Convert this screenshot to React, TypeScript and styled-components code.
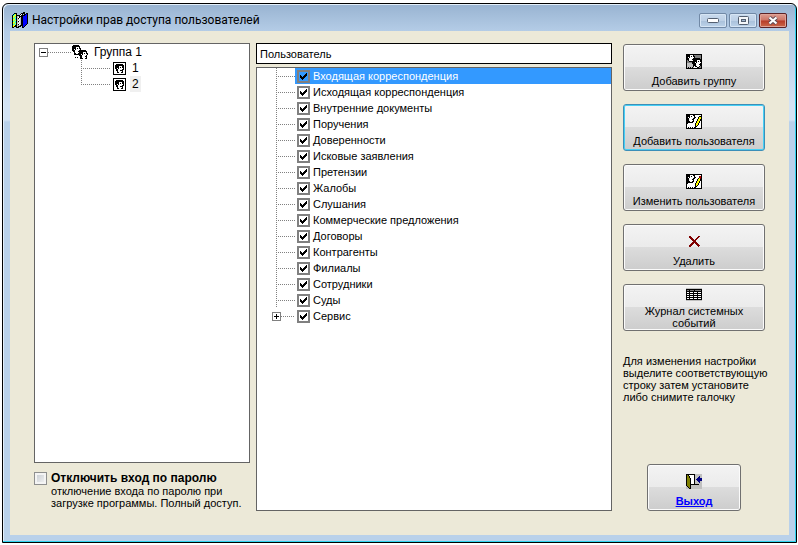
import React, { useState } from 'react';
import styled, { createGlobalStyle, css } from 'styled-components';

const GlobalStyle = createGlobalStyle`
  * { box-sizing: border-box; }
  body {
    margin: 0;
    background: #fff;
    color: #000;
    font: 11px/12px "Liberation Sans", Arial, sans-serif;
  }
  button, input { font: inherit; color: inherit; margin: 0; }
`;

/* ---------- pixel icons ---------- */

const palette: Record<string, string> = {
  k: '#000000',
  w: '#ffffff',
  g: '#808080',
  s: '#c0c0c0',
  y: '#ffff00',
  o: '#808000',
  r: '#800000',
  e: '#c00000',
  b: '#000080',
  u: '#0000ff',
  c: '#00ffff',
};

const icons: Record<string, string[]> = {
  books: [
    '...........kk...',
    '..kkk....kkkk.kk',
    '.kcyk...kwk.kkuk',
    'kcyykkkkwkkkkuuk',
    'kyycksskkkkuuuuk',
    'kycykswkskkuuuuk',
    'kcyckskwskkuuuuk',
    'kyycksswskkuuuuk',
    'kycykswsskkuuuuk',
    'kcyckskwskkuuuuk',
    'kyycksswskkuuuuk',
    'kycykswsskkuuuuk',
    'kcyckskwskkuuuk.',
    'kyykkssskkkuuk..',
    'kykkkskkk.kuk...',
    'kk..kkk...kk....',
  ],
  group: [
    '.kkkkkk.........',
    'kkkkkkkk........',
    'kkkkwwwk........',
    'kkkkwkwkk.......',
    'kkwkwwwwk.......',
    'kkkwwwwkkkkkkk..',
    '.kkwwwkkkkkkkkk.',
    '..kwwwwkkkkwwwk.',
    '..kkwwkkkkkwkwkk',
    '..kkkkkkkwkwwwwk',
    '.......kkkwwwwk.',
    '........kkwwwkk.',
    '...k.k..kkwwwwk.',
    '........kkkwwkk.',
  ],
  user: [
    'kkkkkkkkkkkkk',
    'kwwwwwwwwwwwk',
    'kwwkkkkkkkwwk',
    'kwkkkkkkkkkwk',
    'kwkkkkwwwkkwk',
    'kwkkkkwkwkkwk',
    'kwkkwkwwwwkwk',
    'kwwkkwwwwkkwk',
    'kwwkkwwkkkwwk',
    'kwwwkwwwwkwwk',
    'kwwwkkwwkkwwk',
    'kwwwwwwwwwwwk',
    'kkkkkkkkkkkkk',
  ],
  addGroup: [
    'kkkkkkkkkkkkkkkk',
    'kkkkwwwkgggggggk',
    'kkkkwkwkkggggggk',
    'kkwkwwwwkggggggk',
    'kkkwwwwkkkkkkkgk',
    'kkkwwwkkkkkkkkkk',
    'kgkwwwwkkkkwwwkk',
    'kggkkkkkkkkwkwkk',
    'kgggggkkkwkwwwwk',
    'kssssskkkkwwwwkk',
    'ksssssskkkwwwkkk',
    'ksssssskkkwwwwkk',
    'ksssssskwkkwwkgk',
    'kskskskswwwkkggk',
    'kkkkkkkkkkkkkkkk',
  ],
  editUser: [
    'kkkkkkkkkkkkkkkk',
    'kkkkwwwkkwwwwwwk',
    'kkkkwkwwkwwwwrek',
    'kkwkwwwwkkwwwrek',
    'kkkwwwwkkwwwkyrk',
    'kkkwwwkkwwwkyykk',
    'kkkwwwwkwwwkyykk',
    'kkkkwwkkwwkyykwk',
    'kkkkkkkwwwkyykwk',
    'kkwwwwwwwkyykwwk',
    'kwwwwwwwwkyykwwk',
    'kwwwwwwwwkykwwwk',
    'kwwwwwwwwkkwwwwk',
    'kwkwkwkwkkwwwwwk',
    'kkkkkkkkkkkkkkkk',
  ],
  addUser: [
    'kkkkkkkkkkkkkkkk',
    'kkkkwwwkkwwwwwwk',
    'kkkkwkwwkwwwwkkk',
    'kkwkwwwwkkwwkyyk',
    'kkkwwwwkkwwwkyyk',
    'kkkwwwkkwwwkyykk',
    'kkkwwwwkwwwkyykk',
    'kkkkwwkkwwkyykwk',
    'kkkkkkkwwwkyykwk',
    'kkwwwwwwwkyykwwk',
    'kwwwwwwwwkyykwwk',
    'kwwwwwwwwkykwwwk',
    'kwwwwwwwwkkwwwwk',
    'kwkwkwkwkkwwwwwk',
    'kkkkkkkkkkkkkkkk',
  ],
  remove: [
    'rr.......rr',
    'rrr.....rr.',
    '.rrr...rr..',
    '..rrr.rr...',
    '...rrrr....',
    '....rrr....',
    '...rrrrr...',
    '..rrr.rrr..',
    '.rrr...rrr.',
    'rrr.....rrr',
    'rr.......r.',
  ],
  journal: [
    'ssssssssssssssss',
    'kkkkkkkkkkkkkkkk',
    'kggkggggkggggggk',
    'kkkkkkkkkkkkkkkk',
    'kwwkwwwkwwwkwwwk',
    'kkkkkkkkkkkkkkkk',
    'kwwkwwwkwwwkwwwk',
    'kkkkkkkkkkkkkkkk',
    'kwwkwwwkwwwkwwwk',
    'kkkkkkkkkkkkkkkk',
    'kwwkwwwkwwwkwwwk',
    'kkkkkkkkkkkkkkkk',
    'ssssssssssssssss',
  ],
  exit: [
    'kkkkkkkkksssssss',
    'kokwwwwwksssssss',
    'kookwwwwkssssbss',
    'kookwwwwksssbbss',
    'koookwwwkssbbbbb',
    'koookwwwksbbbbbb',
    'koookwwwkssbbbbb',
    'koookwwwksssbbss',
    'koookwwwkssssbss',
    'koookwwwksssssss',
    'koookkkkkkkkksss',
    'koooksssssssssss',
    'skooksssssssssss',
    'sskoksssssssssss',
    'ssskksssssssssss',
  ],
  tick: [
    '......k',
    '.....kk',
    'k...kkk',
    'kk.kkk.',
    'kkkkk..',
    '.kkk...',
    '..k....',
  ],
  plus: ['..k..', '..k..', 'kkkkk', '..k..', '..k..'],
  minus: ['kkkkk'],
};

const IconSvg = styled.svg`
  display: block;
  flex: none;
`;

function PixelIcon({ name }: { name: string }) {
  const rows = icons[name];
  const width = rows[0].length;
  return (
    <IconSvg
      width={width}
      height={rows.length}
      viewBox={`0 0 ${width} ${rows.length}`}
      shapeRendering="crispEdges"
      aria-hidden="true"
    >
      {rows.flatMap((row, y) =>
        [...row].map((c, x) =>
          palette[c] ? <rect key={`${x}-${y}`} x={x} y={y} width="1" height="1" fill={palette[c]} /> : null,
        ),
      )}
    </IconSvg>
  );
}

/* ---------- window ---------- */

const Desktop = styled.div`
  display: flex;
  min-height: 100vh;
  padding: 3px 1px 2px 2px;
`;

const Window = styled.div`
  flex: 1;
  display: flex;
  flex-direction: column;
  padding: 0 7px 7px;
  border: 1px solid #000;
  border-radius: 6px 6px 0 0;
  background: linear-gradient(#98b3d1, #b5cde7 28px, #d3e3f4 100px, #d3e3f4 116px, #b9d1ea 118px);
  box-shadow: inset -1px -1px #2fd3ee, inset 1px 1px #e4f0fb;
`;

const TitleBar = styled.header`
  display: flex;
  align-items: center;
  gap: 4px;
  height: 27px;
  padding: 5px 2px 0;
`;

const Title = styled.h1`
  flex: 1;
  margin: 0;
  font: 12px/16px Roboto, "Open Sans", sans-serif;
  white-space: nowrap;
`;

const CaptionButtons = styled.div`
  display: flex;
  gap: 2px;
`;

const CaptionButton = styled.button<{ $close?: boolean }>`
  display: flex;
  align-items: center;
  justify-content: center;
  width: 28px;
  height: 15px;
  padding: 0;
  border: 1px solid #7189a6;
  border-radius: 2px;
  background: linear-gradient(#c9daed, #bdd0e6 50%, #a8c0da 51%, #bdd3ea);
  box-shadow: inset 0 0 0 1px #d6e5f4;
  ${(p) =>
    p.$close &&
    css`
      border-color: #5c2226;
      background: linear-gradient(#dd9d92, #cd7465 48%, #b73a27 52%, #cb6a4b);
      box-shadow: inset 0 0 0 1px #e0a397;
    `}
`;

const Content = styled.main`
  flex: 1;
  display: grid;
  grid-template-columns: 216fr 356fr 147px;
  column-gap: 6px;
  padding: 12px 24px 24px;
  background: #ece9d8;
`;

const Column = styled.section`
  display: flex;
  flex-direction: column;
  min-width: 0;
`;

const Actions = styled(Column)`
  gap: 13px;
  padding: 1px 0 0 5px;
`;

/* ---------- trees ---------- */

const Tree = styled.ul`
  flex: 1;
  margin: 0;
  padding: 0;
  border: 1px solid #646464;
  background: #fff;
  list-style: none;
`;

const Branch = styled.ul`
  margin: 0;
  padding: 0 0 0 46px;
  list-style: none;
`;

const Row = styled.div<{ $indent?: number }>`
  display: flex;
  align-items: center;
  height: 16px;
  padding-left: ${(p) => p.$indent ?? 0}px;
`;

const Guide = styled.span<{ $width: number; $trunk?: 'full' | 'half' }>`
  flex: none;
  align-self: stretch;
  width: ${(p) => p.$width}px;
  background-image: repeating-linear-gradient(90deg, #808080 0 1px, transparent 1px 2px),
    repeating-linear-gradient(#808080 0 1px, transparent 1px 2px);
  background-repeat: no-repeat;
  background-position: 0 8px, 0 0;
  background-size: 100% 1px,
    ${(p) => (p.$trunk ? '1px' : '0')} ${(p) => (p.$trunk === 'half' ? '8px' : '100%')};
`;

const Expander = styled.button`
  display: flex;
  align-items: center;
  justify-content: center;
  flex: none;
  width: 9px;
  height: 9px;
  padding: 0;
  border: 1px solid #808080;
  background: #fff;
`;

const NodeLabel = styled.span<{ $active?: boolean }>`
  margin-left: 4px;
  padding: 2px;
  font-size: 12px;
  background: ${(p) => (p.$active ? '#f0f0f0' : 'transparent')};
`;

const NodeIcon = styled.span`
  margin-left: 3px;
`;

const Field = styled.input`
  width: 100%;
  height: 21px;
  margin-bottom: 3px;
  padding: 0 3px;
  border: 1px solid #000;
  border-radius: 0;
  background: #fff;
`;

const RightLabel = styled.label<{ $active: boolean }>`
  flex: 1;
  display: flex;
  align-items: center;
  gap: 3px;
  height: 16px;
  padding-left: 2px;
  white-space: nowrap;
  color: ${(p) => (p.$active ? '#fff' : '#000')};
  background: ${(p) => (p.$active ? '#3399ff' : 'transparent')};
`;

const TickFrame = styled.span<{ $active: boolean }>`
  display: grid;
  place-items: center;
  flex: none;
  width: 13px;
  height: 13px;
  border: 2px solid #808080;
  background: ${(p) => (p.$active ? '#3399ff' : '#fff')};
  > * { grid-area: 1 / 1; }
  > input { width: 9px; height: 9px; opacity: 0; }
`;

/* ---------- controls ---------- */

const ActionButton = styled.button<{ $focused?: boolean; $compact?: boolean }>`
  display: flex;
  flex-direction: column;
  align-items: center;
  justify-content: flex-end;
  gap: ${(p) => (p.$compact ? 3 : 6)}px;
  height: 47px;
  padding: ${(p) => (p.$compact ? '0 8px 1px' : '0 2px 3px')};
  border: 1px solid ${(p) => (p.$focused ? '#3c8fb8' : '#707070')};
  border-radius: 3px;
  background: linear-gradient(#f3f3f3, #ebebeb 49%, #dcdcdc 50%, #cdcdcd);
  box-shadow: inset 0 0 0 1px ${(p) => (p.$focused ? '#47d0f5' : '#fbfbfb')};
`;

const ExitButton = styled(ActionButton)`
  align-self: center;
  width: 94px;
  margin-top: auto;
`;

const ExitText = styled.span`
  font-weight: bold;
  text-decoration: underline;
  color: #0000ff;
`;

const IconSlot = styled.span`
  display: flex;
  align-items: center;
  height: 15px;
`;

const Hint = styled.p`
  margin: 11px 0 0;
  white-space: nowrap;
`;

const PasswordOption = styled.div`
  display: grid;
  grid-template-columns: 13px 1fr;
  column-gap: 4px;
  align-items: center;
  height: 48px;
  align-content: start;
  padding-top: 8px;
  white-space: nowrap;
`;

const PlainCheckbox = styled.input`
  appearance: none;
  width: 13px;
  height: 13px;
  border: 1px solid #8e8f8f;
  background: linear-gradient(135deg, #c4c9cf, #f6f6f6);
  box-shadow: inset 0 0 0 2px #f4f4f4;
  &:checked { background: #4b6a97; }
`;

const OptionTitle = styled.label`
  font-size: 12px;
  font-weight: bold;
  line-height: 14px;
`;

const OptionNote = styled.span`
  grid-column: 2;
`;

const sections = [
  'Входящая корреспонденция',
  'Исходящая корреспонденция',
  'Внутренние документы',
  'Поручения',
  'Доверенности',
  'Исковые заявления',
  'Претензии',
  'Жалобы',
  'Слушания',
  'Коммерческие предложения',
  'Договоры',
  'Контрагенты',
  'Филиалы',
  'Сотрудники',
  'Суды',
];

const actions = [
  { icon: 'addGroup', text: 'Добавить группу' },
  { icon: 'addUser', text: 'Добавить пользователя', focused: true },
  { icon: 'editUser', text: 'Изменить пользователя' },
  { icon: 'remove', text: 'Удалить' },
  { icon: 'journal', text: 'Журнал системных событий', compact: true },
];

function Permission({ name, active = false }: { name: string; active?: boolean }) {
  const [checked, setChecked] = useState(true);
  return (
    <RightLabel $active={active}>
      <TickFrame $active={active}>
        <input type="checkbox" checked={checked} onChange={() => setChecked(!checked)} />
        {checked && <PixelIcon name="tick" />}
      </TickFrame>
      {name}
    </RightLabel>
  );
}

export default function App() {
  return (
    <>
      <GlobalStyle />
      <Desktop>
        <Window>
          <TitleBar>
            <PixelIcon name="books" />
            <Title>Настройки прав доступа пользователей</Title>
            <CaptionButtons>
              <CaptionButton aria-label="Свернуть">
                <svg width="12" height="5" aria-hidden="true">
                  <rect x="0.5" y="0.5" width="11" height="4" rx="1" fill="#fff" stroke="#535f70" />
                </svg>
              </CaptionButton>
              <CaptionButton aria-label="Развернуть">
                <svg width="11" height="9" aria-hidden="true">
                  <rect x="0.5" y="0.5" width="10" height="8" rx="1" fill="#f4f7fa" stroke="#535f70" />
                  <rect x="3.5" y="3.5" width="4" height="2" fill="#9fb5cd" stroke="#535f70" />
                </svg>
              </CaptionButton>
              <CaptionButton $close aria-label="Закрыть">
                <svg width="12" height="9" aria-hidden="true">
                  <path d="M2.5 1.5 L9.5 7.5 M9.5 1.5 L2.5 7.5" stroke="#5b4a55" strokeWidth="4" />
                  <path d="M2.5 1.5 L9.5 7.5 M9.5 1.5 L2.5 7.5" stroke="#fff" strokeWidth="2.2" />
                </svg>
              </CaptionButton>
            </CaptionButtons>
          </TitleBar>
          <Content>
            <Column>
              <Tree>
                <li>
                  <Row $indent={4}>
                    <Expander aria-label="Свернуть группу">
                      <PixelIcon name="minus" />
                    </Expander>
                    <Guide $width={24} />
                    <PixelIcon name="group" />
                    <NodeLabel>Группа 1</NodeLabel>
                  </Row>
                  <Branch>
                    <li>
                      <Row>
                        <Guide $width={29} $trunk="full" />
                        <NodeIcon>
                          <PixelIcon name="user" />
                        </NodeIcon>
                        <NodeLabel>1</NodeLabel>
                      </Row>
                    </li>
                    <li>
                      <Row>
                        <Guide $width={29} $trunk="half" />
                        <NodeIcon>
                          <PixelIcon name="user" />
                        </NodeIcon>
                        <NodeLabel $active>2</NodeLabel>
                      </Row>
                    </li>
                  </Branch>
                </li>
              </Tree>
              <PasswordOption>
                <PlainCheckbox type="checkbox" id="no-password" />
                <OptionTitle htmlFor="no-password">Отключить вход по паролю</OptionTitle>
                <OptionNote>
                  отключение входа по паролю при
                  <br />
                  загрузке программы. Полный доступ.
                </OptionNote>
              </PasswordOption>
            </Column>
            <Column>
              <Field aria-label="Пользователь" defaultValue="Пользователь" />
              <Tree>
                {sections.map((name, i) => (
                  <li key={name}>
                    <Row $indent={19}>
                      <Guide $width={19} $trunk="full" />
                      <Permission name={name} active={i === 0} />
                    </Row>
                  </li>
                ))}
                <li>
                  <Row $indent={15}>
                    <Expander aria-label="Развернуть Сервис">
                      <PixelIcon name="plus" />
                    </Expander>
                    <Guide $width={14} />
                    <Permission name="Сервис" />
                  </Row>
                </li>
              </Tree>
            </Column>
            <Actions>
              {actions.map((a) => (
                <ActionButton key={a.text} $focused={a.focused} $compact={a.compact}>
                  <IconSlot>
                    <PixelIcon name={a.icon} />
                  </IconSlot>
                  {a.text}
                </ActionButton>
              ))}
              <Hint>
                Для изменения настройки
                <br />
                выделите соответствующую
                <br />
                строку затем установите
                <br />
                либо снимите галочку
              </Hint>
              <ExitButton>
                <IconSlot>
                  <PixelIcon name="exit" />
                </IconSlot>
                <ExitText>Выход</ExitText>
              </ExitButton>
            </Actions>
          </Content>
        </Window>
      </Desktop>
    </>
  );
}
